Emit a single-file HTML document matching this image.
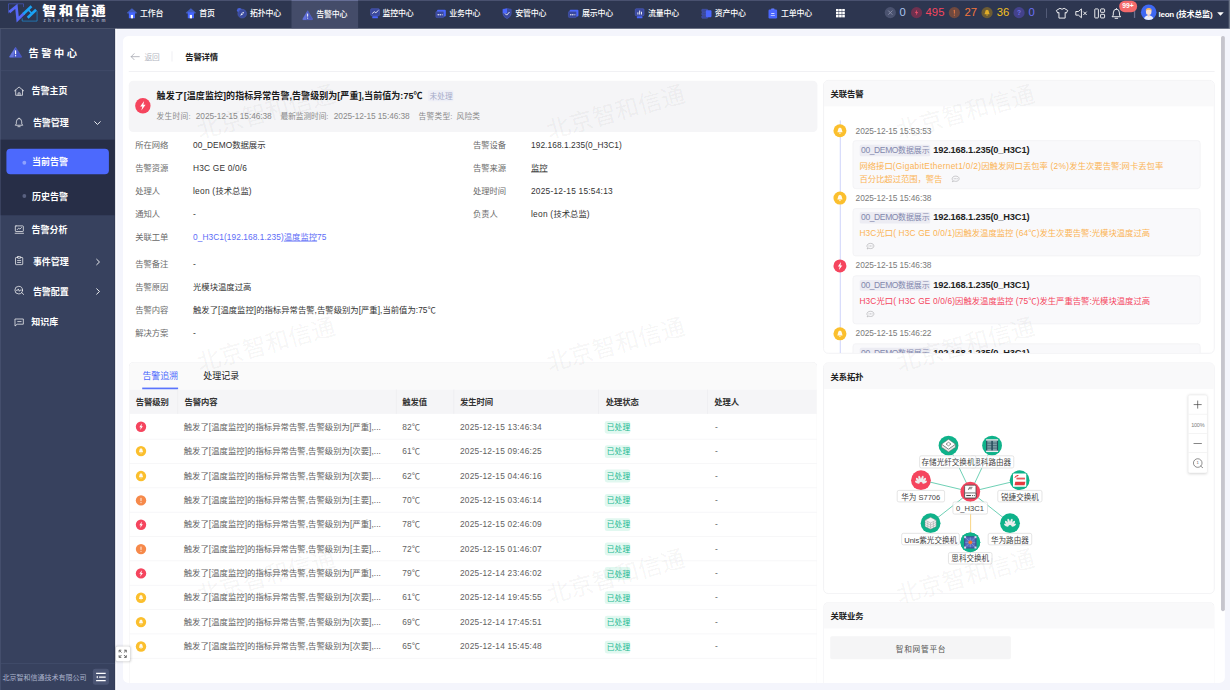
<!DOCTYPE html>
<html lang="zh-CN">
<head>
<meta charset="utf-8">
<title>告警详情</title>
<style>
html,body{margin:0;padding:0;width:1230px;height:690px;overflow:hidden;background:#f4f5fc;}
#app{position:absolute;left:0;top:0;width:1920px;height:1078px;transform:scale(0.640625);transform-origin:0 0;font-family:"Liberation Sans","Noto Sans CJK SC",sans-serif;font-size:12px;color:#333;overflow:hidden;background:#f4f5fc;}
#app *{box-sizing:border-box;}
.abs{position:absolute;}
.nw{white-space:nowrap;}
svg{display:block;overflow:visible;}
/* ---------- top bar ---------- */
#top{position:absolute;left:0;top:0;width:1920px;height:44.644px;background:#2d3650;}
#top .hl{position:absolute;left:0;top:0;width:100%;height:1.405px;background:#5a6180;}
#top .act{position:absolute;left:455.337px;top:0;width:103.493px;height:44.644px;background:#444c69;}
#top .act i{position:absolute;left:0;top:0;width:100%;height:1.405px;background:#7a82b0;}
.tm{position:absolute;top:0;height:44.644px;line-height:42.771px;color:#fff;font-size:12.4px;font-weight:500;white-space:nowrap;letter-spacing:-0.3px;}
.tic{position:absolute;top:12.956px;width:15.61px;height:15.61px;}
/* ---------- sidebar ---------- */
#side{position:absolute;left:0;top:44.644px;width:180.293px;height:1033.366px;background:#37415e;}

#side .edge{position:absolute;left:0;top:0;width:1.405px;height:100%;background:#4d5775;}
#side .shadow{position:absolute;right:0;top:0;width:2.498px;height:100%;background:linear-gradient(90deg,rgba(30,36,58,0),rgba(30,36,58,.55));}
.sm{margin-top:1.093px;position:absolute;color:#fff;font-size:14px;font-weight:bold;white-space:nowrap;line-height:31.22px;height:31.22px;}
.sic{position:absolute;}
.sic path,.sic rect,.sic circle{vector-effect:none;}

/* ---------- main ---------- */
#mainedge{position:absolute;left:180.293px;top:44.644px;width:2.185px;height:1033.366px;background:#fdfdff;}
#topedge{position:absolute;left:179.512px;top:44.644px;width:1740.488px;height:1.561px;background:#fdfdff;}
#card{position:absolute;left:191.844px;top:56.195px;width:1719.727px;height:1009.639px;background:#fff;border-radius:8.585px;}
.t{position:absolute;white-space:nowrap;height:31.22px;line-height:31.22px;margin-top:-15.61px;}
.t .l{letter-spacing:var(--ls,0px);}
.t.cj{letter-spacing:var(--ls,0px);}
.t.tg .l{font-size:13.3px;}
.lb{font-size:13px;color:#6a6a6a;}
.vl{font-size:13px;color:#333;}
.sub{font-size:12px;color:#8a8a8a;}
</style>
</head>
<body>
<div id="app">
<!--TOP-->
<div id="top">
  <div class="hl"></div>
  <div class="act"><i></i></div>
<svg class="abs" style="left:12.488px;top:5.463px;width:46.829px;height:29.659px" viewBox="8 3.5 30 19" fill="none">
<path d="M23.8 7.4 V4.1 H8.8 V13.6" stroke="#4f5fe0" stroke-width=".55"/>
<path d="M22.5 18.6 V21.4 H37.4 V11.2" stroke="#1aa3f5" stroke-width=".55"/>
<path d="M9.6 12.4 L16.7 6.6 L18 19.8 L24.4 13.6" stroke="#5668f7" stroke-width="2.7" stroke-linejoin="miter"/>
<path d="M23.6 14.3 L31.8 6.5" stroke="#1aa3f5" stroke-width="2.6"/>
<path d="M28 18 L36.4 10" stroke="#1aa3f5" stroke-width="2.6"/>
<path d="M28.6 10.2 L32 13.6" stroke="#1aa3f5" stroke-width="1.6"/>
</svg>
<div class="abs nw" style="left:66.498px;top:2.029px;font-size:19.8px;line-height:30.595px;font-weight:900;color:#fff;letter-spacing:3.1px;transform:scaleX(1.122);transform-origin:0 50%;">智和信通</div>
<div class="abs nw" style="left:67.746px;top:28.41px;font-size:7px;line-height:7.805px;font-weight:bold;color:#a4a9bf;letter-spacing:3.86px;">zhtelecom.com</div>
<svg class="tic" style="left:198.244px;top:12.8px;width:15.922px;height:15.922px" viewBox="0 0 102 102"><path d="M51 0 L102 44 L96 52 L6 52 L0 44 Z" fill="#4a6be0" opacity=".75"/><rect x="20" y="40" width="62" height="60" rx="4" fill="#4566ff"/><rect x="40" y="66" width="22" height="34" fill="#fff"/></svg><div class="tm" style="left:218.537px">工作台</div>
<svg class="tic" style="left:289.873px;top:12.8px;width:15.922px;height:15.922px" viewBox="0 0 102 102"><path d="M51 0 L102 44 L96 52 L6 52 L0 44 Z" fill="#4a6be0" opacity=".75"/><rect x="20" y="40" width="62" height="60" rx="4" fill="#4566ff"/><rect x="40" y="66" width="22" height="34" fill="#fff"/></svg><div class="tm" style="left:310.946px">首页</div>
<svg class="tic" style="left:369.327px;top:12.488px;width:16.234px;height:16.859px" viewBox="0 0 104 108"><circle cx="30" cy="26" r="24" fill="#4a66e8" opacity=".9"/><circle cx="58" cy="60" r="44" fill="#3a4a9e"/><circle cx="58" cy="60" r="44" fill="none" stroke="#5064c8" stroke-width="4"/><path d="M78 40 L64 68 L38 80 L52 52 Z" fill="#fff"/><circle cx="58" cy="60" r="6" fill="#3a4a9e"/></svg><div class="tm" style="left:390.244px">拓扑中心</div>
<svg class="tic" style="left:471.883px;top:15.922px;width:16.546px;height:14.985px" viewBox="0 0 106 96"><path d="M53 4 L102 88 Q104 94 98 94 L8 94 Q2 94 4 88 Z" fill="#4a58be" stroke="#5868d0" stroke-width="6" stroke-linejoin="round"/><path d="M53 4 L36 94 L8 94 Q2 94 4 88 Z" fill="#7d8cf5" opacity=".5"/><rect x="48" y="32" width="10" height="32" rx="4" fill="#fff"/><circle cx="53" cy="78" r="6" fill="#fff"/></svg><div class="tm" style="left:493.737px;margin-top:1.249px">告警中心</div>
<svg class="tic" style="left:577.561px;top:13.424px;width:14.985px;height:15.61px" viewBox="0 0 96 100"><rect x="4" y="4" width="88" height="70" rx="10" fill="#3a489c" stroke="#5266d4" stroke-width="5"/><path d="M22 50 L40 34 L56 44 L80 22" fill="none" stroke="#fff" stroke-width="8" stroke-linecap="round" stroke-linejoin="round"/><rect x="20" y="80" width="56" height="18" rx="5" fill="#4a66ff"/></svg><div class="tm" style="left:597.229px">监控中心</div>
<svg class="tic" style="left:679.961px;top:14.985px;width:16.234px;height:13.112px" viewBox="0 0 104 84"><rect x="14" y="2" width="88" height="66" rx="10" fill="#4a66ff"/><rect x="2" y="18" width="80" height="62" rx="10" fill="#3a489c" stroke="#5266d4" stroke-width="4"/><circle cx="26" cy="52" r="7" fill="#fff"/><circle cx="46" cy="52" r="7" fill="#fff"/><circle cx="66" cy="52" r="7" fill="#fff" opacity=".6"/></svg><div class="tm" style="left:701.19px">业务中心</div>
<svg class="tic" style="left:784.234px;top:13.424px;width:14.985px;height:16.546px" viewBox="0 0 96 106"><path d="M6 10 L48 2 L90 10 L90 56 Q88 84 48 104 Q8 84 6 56 Z" fill="#3a489c" stroke="#5266d4" stroke-width="4"/><path d="M6 10 L48 2 L48 50 L6 50 Z" fill="#4a66ff"/><path d="M30 54 L44 68 L70 40" fill="none" stroke="#fff" stroke-width="9" stroke-linecap="round" stroke-linejoin="round"/></svg><div class="tm" style="left:804.215px">安管中心</div>
<svg class="tic" style="left:887.259px;top:14.985px;width:16.234px;height:13.112px" viewBox="0 0 104 84"><rect x="14" y="2" width="88" height="66" rx="10" fill="#4a66ff"/><rect x="2" y="18" width="80" height="62" rx="10" fill="#3a489c" stroke="#5266d4" stroke-width="4"/><circle cx="26" cy="52" r="7" fill="#fff"/><circle cx="46" cy="52" r="7" fill="#fff"/><circle cx="66" cy="52" r="7" fill="#fff" opacity=".6"/></svg><div class="tm" style="left:908.488px">展示中心</div>
<svg class="tic" style="left:991.22px;top:13.424px;width:14.985px;height:15.61px" viewBox="0 0 96 100"><rect x="4" y="4" width="88" height="70" rx="10" fill="#3a489c" stroke="#5266d4" stroke-width="5"/><rect x="26" y="40" width="9" height="22" fill="#fff"/><rect x="44" y="22" width="9" height="40" fill="#fff"/><rect x="62" y="34" width="9" height="28" fill="#fff"/><rect x="20" y="80" width="56" height="18" rx="5" fill="#4a66ff"/></svg><div class="tm" style="left:1011.512px">流量中心</div>
<svg class="tic" style="left:1094.556px;top:14.049px;width:15.922px;height:14.985px" viewBox="0 0 102 96"><rect x="3" y="3" width="60" height="26" rx="6" fill="#3a489c" stroke="#5266d4" stroke-width="4"/><rect x="3" y="35" width="60" height="26" rx="6" fill="#3a489c" stroke="#5266d4" stroke-width="4"/><rect x="3" y="67" width="60" height="26" rx="6" fill="#3a489c" stroke="#5266d4" stroke-width="4"/><rect x="44" y="14" width="56" height="68" rx="8" fill="#4a66ff"/></svg><div class="tm" style="left:1115.785px">资产中心</div>
<svg class="tic" style="left:1198.829px;top:13.112px;width:14.673px;height:16.234px" viewBox="0 0 94 104"><rect x="30" y="2" width="34" height="20" rx="6" fill="#6c84ff"/><rect x="4" y="12" width="86" height="90" rx="12" fill="#4a66ff"/><rect x="30" y="50" width="34" height="8" rx="3" fill="#fff"/><rect x="26" y="70" width="42" height="8" rx="3" fill="#cfd8ff"/></svg><div class="tm" style="left:1219.122px">工单中心</div>
<svg class="abs" style="left:1304.663px;top:13.58px;width:13.737px;height:13.112px" viewBox="0 0 88 84"><rect x="0" y="0" width="26" height="24" fill="#fff"/><rect x="31" y="0" width="26" height="24" fill="#fff"/><rect x="62" y="0" width="26" height="24" fill="#fff"/><rect x="0" y="30" width="26" height="24" fill="#fff"/><rect x="31" y="30" width="26" height="24" fill="#fff"/><rect x="62" y="30" width="26" height="24" fill="#fff"/><rect x="0" y="60" width="26" height="24" fill="#fff"/><rect x="31" y="60" width="26" height="24" fill="#fff"/><rect x="62" y="60" width="26" height="24" fill="#fff"/></svg>
<svg class="abs" style="left:1380.839px;top:10.927px;width:17.483px;height:17.483px" viewBox="0 0 112 112"><circle cx="56" cy="56" r="56" fill="#4a526f"/><path d="M38 38 L74 74 M74 38 L38 74" stroke="#8d93ad" stroke-width="9" stroke-linecap="round"/></svg>
<div class="abs nw" style="left:1404.254px;top:0;height:44.644px;line-height:39.961px;font-size:17.6px;color:#a9c3ee;">0</div>
<svg class="abs" style="left:1421.737px;top:10.927px;width:17.483px;height:17.483px" viewBox="0 0 112 112"><circle cx="56" cy="56" r="56" fill="#70314f"/><path d="M62 24 L40 60 L54 60 L48 88 L72 50 L58 50 Z" fill="#e8506a"/></svg>
<div class="abs nw" style="left:1444.839px;top:0;height:44.644px;line-height:39.961px;font-size:17.6px;color:#f6465f;">495</div>
<svg class="abs" style="left:1481.366px;top:10.927px;width:17.483px;height:17.483px" viewBox="0 0 112 112"><circle cx="56" cy="56" r="56" fill="#70493f"/><rect x="51" y="28" width="10" height="38" rx="4" fill="#e87a45"/><circle cx="56" cy="80" r="6" fill="#e87a45"/></svg>
<div class="abs nw" style="left:1505.405px;top:0;height:44.644px;line-height:39.961px;font-size:17.6px;color:#f5773d;">27</div>
<svg class="abs" style="left:1532.254px;top:10.927px;width:17.483px;height:17.483px" viewBox="0 0 112 112"><circle cx="56" cy="56" r="56" fill="#6e5c33"/><path d="M56 26 Q76 28 76 56 L82 72 L30 72 L36 56 Q36 28 56 26 Z" fill="#e0ac28"/><circle cx="56" cy="80" r="7" fill="#e0ac28"/></svg>
<div class="abs nw" style="left:1555.98px;top:0;height:44.644px;line-height:39.961px;font-size:17.6px;color:#f7c11e;">36</div>
<svg class="abs" style="left:1581.893px;top:10.927px;width:17.483px;height:17.483px" viewBox="0 0 112 112"><circle cx="56" cy="56" r="56" fill="#44428c"/><text x="56" y="80" font-size="68" font-weight="bold" text-anchor="middle" fill="#6f72e8" font-family="Liberation Sans,sans-serif">?</text></svg>
<div class="abs nw" style="left:1605.62px;top:0;height:44.644px;line-height:39.961px;font-size:17.6px;color:#6b6ff5;">0</div>
<div class="abs" style="left:1633.093px;top:13.112px;width:1.249px;height:15.298px;background:#69718e"></div>
<svg class="abs" style="left:1648.39px;top:11.551px;width:19.668px;height:17.171px" viewBox="0 0 126 110" fill="none" stroke="#fff" stroke-width="9" stroke-linejoin="round"><path d="M42 6 Q63 26 84 6 L120 28 L106 54 L94 48 L94 104 L32 104 L32 48 L20 54 L6 28 Z"/></svg>
<svg class="abs" style="left:1678.985px;top:12.8px;width:18.107px;height:15.61px" viewBox="0 0 116 100" fill="none" stroke="#fff" stroke-width="9" stroke-linejoin="round" stroke-linecap="round"><path d="M6 32 L28 32 L58 6 L58 94 L28 68 L6 68 Z"/><path d="M80 36 L108 64 M108 36 L80 64"/></svg>
<svg class="abs" style="left:1707.707px;top:13.112px;width:17.171px;height:15.922px" viewBox="0 0 110 102" fill="none" stroke="#fff" stroke-width="9" stroke-linejoin="round"><rect x="6" y="6" width="36" height="90" rx="6"/><rect x="64" y="6" width="40" height="34" rx="6"/><rect x="64" y="60" width="40" height="36" rx="6"/></svg>
<svg class="abs" style="left:1735.18px;top:12.8px;width:15.298px;height:16.859px" viewBox="0 0 98 108" fill="none" stroke="#fff" stroke-width="9" stroke-linejoin="round" stroke-linecap="round"><path d="M49 6 Q80 10 80 46 L80 68 L92 84 L6 84 L18 68 L18 46 Q18 10 49 6 Z"/><path d="M36 100 L62 100"/></svg>
<div class="abs" style="left:1770.459px;top:13.112px;width:1.249px;height:15.298px;background:#69718e"></div>
<div class="abs nw" style="left:1746.732px;top:1.093px;width:28.098px;height:17.795px;border-radius:8.898px;background:#f4696b;color:#fff;font-size:10.6px;font-weight:bold;line-height:16.546px;text-align:center;">99+</div>
<svg class="abs" style="left:1781.385px;top:6.712px;width:24.195px;height:24.195px" viewBox="0 0 155 155"><defs><clipPath id="avc"><circle cx="77.5" cy="77.5" r="77.5"/></clipPath></defs><circle cx="77.5" cy="77.5" r="77.5" fill="#3f68f2"/><g clip-path="url(#avc)"><path d="M28 155 Q30 112 77 108 Q124 112 127 155 Z" fill="#e9eefc"/><path d="M62 108 L77 128 L92 108 Z" fill="#f7d5bd"/><ellipse cx="77.5" cy="72" rx="28" ry="32" fill="#fbe0cb"/><path d="M48 66 Q46 34 78 34 Q110 34 108 66 Q96 52 78 52 Q60 52 48 66 Z" fill="#f0b35c"/></g></svg>
<div class="abs nw" style="left:1808.234px;top:0;height:44.644px;line-height:46.829px;font-size:12.6px;font-weight:bold;color:#fff;letter-spacing:-0.35px;">leon (技术总监)</div>
<svg class="abs" style="left:1900.332px;top:18.732px;width:10.302px;height:5.62px" viewBox="0 0 66 36"><path d="M0 0 L66 0 L33 36 Z" fill="#fff"/></svg>
<div class="abs" style="left:1918.439px;top:0;width:1.561px;height:44.644px;background:#6b7487"></div>
</div>
<!--SIDE-->
<div id="side">
<div class="edge"></div>
<svg class="sic" style="left:14.049px;top:28.722px;width:20.605px;height:17.171px" viewBox="0 0 132 110"><path d="M66 4 L126 98 Q130 106 122 106 L10 106 Q2 106 6 98 Z" fill="#4353c4" stroke="#5565d6" stroke-width="5" stroke-linejoin="round"/><path d="M66 4 L44 106 L10 106 Q2 106 6 98 Z" fill="#8b9af8" opacity=".5"/><rect x="60" y="36" width="12" height="38" rx="5" fill="#fff"/><circle cx="66" cy="90" r="7" fill="#fff"/></svg>
<div class="abs nw" style="left:44.332px;top:22.478px;height:31.22px;line-height:31.22px;font-size:16px;font-weight:bold;color:#fff;letter-spacing:3.9px;margin-top:1.093px">告警中心</div>
<div class="abs" style="left:0;top:65.093px;width:179.512px;height:1.249px;background:#46506e"></div>
<svg class="sic" style="left:21.854px;top:89.912px;width:15.61px;height:14.673px" viewBox="0 0 100 94" fill="none" stroke="#fff" stroke-linecap="round" stroke-linejoin="round" stroke-width="7"><path d="M4 44 L50 5 L96 44"/><path d="M16 36 V88 H84 V36"/><path d="M40 88 V64 H60 V88"/></svg>
<div class="sm" style="left:49.171px;top:81.639px">告警主页</div>
<svg class="sic" style="left:23.102px;top:138.927px;width:13.424px;height:14.673px" viewBox="0 0 86 94" fill="none" stroke="#fff" stroke-linecap="round" stroke-linejoin="round" stroke-width="7"><path d="M43 5 Q70 8 70 40 L70 60 L80 74 L6 74 L16 60 L16 40 Q16 8 43 5 Z"/><path d="M32 88 H54"/></svg>
<div class="sm" style="left:51.356px;top:130.654px">告警管理</div>
<svg class="sic" style="left:147.044px;top:144.234px;width:10.302px;height:6.244px" viewBox="0 0 66 40" fill="none" stroke="#fff" stroke-linecap="round" stroke-linejoin="round" stroke-width="9"><path d="M5 6 L33 34 L61 6"/></svg>
<div class="abs" style="left:1.405px;top:173.737px;width:178.107px;height:117.541px;background:#272e47"></div>
<div class="abs" style="left:9.522px;top:187.317px;width:160.624px;height:39.961px;background:#4c69fd;border-radius:6.244px"></div>
<div class="abs" style="left:35.902px;top:207.298px;width:5.932px;height:5.932px;margin:-0.468px;border-radius:50%;background:#8fa2fe"></div>
<div class="sm" style="left:50.107px;top:192.468px">当前告警</div>
<div class="abs" style="left:35.902px;top:259.122px;width:5.932px;height:5.932px;margin:-0.468px;border-radius:50%;background:#596180"></div>
<div class="sm" style="left:50.107px;top:246.01px">历史告警</div>
<svg class="sic" style="left:23.102px;top:307.2px;width:14.361px;height:13.112px" viewBox="0 0 92 84" fill="none" stroke="#fff" stroke-linecap="round" stroke-linejoin="round" stroke-width="7"><rect x="6" y="4" width="80" height="56" rx="6"/><path d="M4 78 H88"/><path d="M24 42 L40 26 L52 36 L68 20"/></svg>
<div class="sm" style="left:49.327px;top:297.366px">告警分析</div>
<svg class="sic" style="left:23.102px;top:355.278px;width:13.737px;height:13.737px" viewBox="0 0 88 88" fill="none" stroke="#fff" stroke-linecap="round" stroke-linejoin="round" stroke-width="7"><path d="M28 12 H14 Q8 12 8 18 V78 Q8 84 14 84 H74 Q80 84 80 78 V18 Q80 12 74 12 H60"/><rect x="28" y="4" width="32" height="16" rx="4"/><path d="M28 42 H60 M28 62 H60"/></svg>
<div class="sm" style="left:51.356px;top:347.473px">事件管理</div>
<svg class="sic" style="left:149.854px;top:359.024px;width:6.244px;height:9.99px" viewBox="0 0 40 64" fill="none" stroke="#fff" stroke-linecap="round" stroke-linejoin="round" stroke-width="9"><path d="M6 5 L34 32 L6 59"/></svg>
<svg class="sic" style="left:22.478px;top:401.483px;width:15.922px;height:14.361px" viewBox="0 0 102 92" fill="none" stroke="#fff" stroke-linecap="round" stroke-linejoin="round" stroke-width="7"><circle cx="46" cy="44" r="38"/><path d="M76 70 L96 88"/><path d="M22 46 L34 46 L42 32 L52 56 L60 44 L70 44"/></svg>
<div class="sm" style="left:51.356px;top:394.146px">告警配置</div>
<svg class="sic" style="left:149.854px;top:405.541px;width:6.244px;height:9.99px" viewBox="0 0 40 64" fill="none" stroke="#fff" stroke-linecap="round" stroke-linejoin="round" stroke-width="9"><path d="M6 5 L34 32 L6 59"/></svg>
<svg class="sic" style="left:23.102px;top:452.059px;width:14.361px;height:12.488px" viewBox="0 0 92 80" fill="none" stroke="#fff" stroke-linecap="round" stroke-linejoin="round" stroke-width="7"><path d="M6 6 H86 V58 H24 L6 74 Z"/><path d="M30 32 H64"/></svg>
<div class="sm" style="left:48.702px;top:442.693px">知识库</div>
<div class="abs" style="left:0;top:990.595px;width:179.512px;height:1.249px;background:#46506e"></div>
<div class="abs nw" style="left:3.746px;top:997.463px;height:31.22px;line-height:31.22px;font-size:11px;color:#aab2cb;letter-spacing:-0.05px">北京智和信通技术有限公司</div>
<div class="abs" style="left:145.483px;top:999.493px;width:24.663px;height:24.663px;border-radius:3.746px;background:#4b5574"></div>
<svg class="sic" style="left:150.478px;top:1004.956px;width:14.985px;height:13.737px" viewBox="0 0 96 88" fill="none" stroke="#fff" stroke-width="12"><path d="M0 8 H96 M30 44 H96 M0 80 H96"/><path d="M0 44 L18 30 V58 Z" fill="#fff" stroke="none"/></svg>
<div class="shadow"></div>
</div>
<div id="topedge"></div><div id="mainedge"></div>
<div id="card"></div>
<svg class="abs" style="left:204.176px;top:83.044px;width:14.049px;height:10.927px" viewBox="0 0 90 70" fill="none" stroke="#9a9ca6" stroke-width="7" stroke-linecap="round" stroke-linejoin="round"><path d="M86 35 H6 M34 5 L5 35 L34 65"/></svg>
<div class="t  cj" style="left:225.405px;top:89.756px;font-size:12px;color:#b4b7c2;">返回</div>
<div class="abs" style="left:267.551px;top:80.078px;width:1.249px;height:16.234px;background:#e6e6ec"></div>
<div class="t  cj" style="left:289.093px;top:89.756px;--ls:-0.204px;font-size:13px;font-weight:bold;color:#222;">告警详情</div>
<div class="abs" style="left:200.741px;top:110.517px;width:1695.22px;height:1.561px;background:#eaeaee"></div>
<div class="abs" style="left:201.054px;top:125.815px;width:1075.2px;height:79.922px;background:#f5f5f7;border-radius:7.024px"></div>
<svg class="abs" style="left:210.732px;top:153.288px;width:24.039px;height:24.039px" viewBox="0 0 154 154"><circle cx="77" cy="77" r="77" fill="#f5455e"/><path d="M90 30 L50 84 L72 84 L62 126 L104 68 L82 68 Z" fill="#fff"/></svg>
<div class="t  cj" style="left:244.449px;top:149.541px;--ls:0.130px;font-size:14px;font-weight:bold;color:#1a1a1a;">触发了[温度监控]的指标异常告警,告警级别为[严重],当前值为:75℃</div>
<div class="abs" style="left:668.41px;top:141.424px;width:39.337px;height:16.234px;background:#eeeff7;border-radius:2.341px"></div>
<div class="t  cj" style="left:670.595px;top:150.634px;--ls:-0.038px;font-size:12px;color:#a6abc8;">未处理</div>
<div class="t sub cj" style="left:244.449px;top:181.385px;--ls:0.439px;">发生时间:</div>
<div class="t sub" style="left:305.639px;top:180.917px;--ls:-0.126px;font-size:13px;"><span class="l">2025-12-15 15:46:38</span></div>
<div class="t sub cj" style="left:438.01px;top:181.385px;--ls:-0.104px;">最新监测时间:</div>
<div class="t sub" style="left:521.054px;top:180.917px;--ls:-0.126px;font-size:13px;"><span class="l">2025-12-15 15:46:38</span></div>
<div class="t sub cj" style="left:653.268px;top:181.385px;--ls:0.439px;">告警类型:</div>
<div class="t sub cj" style="left:712.741px;top:181.385px;--ls:0.274px;">风险类</div>
<div class="t lb cj" style="left:211.044px;top:226.81px;--ls:-0.079px;">所在网络</div>
<div class="t vl" style="left:301.268px;top:226.81px;--ls:0.065px;"><span class="l">00_DEMO</span>数据展示</div>
<div class="t lb cj" style="left:738.341px;top:226.81px;--ls:-0.079px;">告警设备</div>
<div class="t vl" style="left:828.878px;top:226.81px;--ls:0.114px;"><span class="l">192.168.1.235(0_H3C1)</span></div>
<div class="t lb cj" style="left:211.044px;top:262.556px;--ls:-0.079px;">告警资源</div>
<div class="t vl" style="left:301.268px;top:262.556px;--ls:0.306px;"><span class="l">H3C GE 0/0/6</span></div>
<div class="t lb cj" style="left:738.341px;top:262.556px;--ls:-0.079px;">告警来源</div>
<div class="t vl cj" style="left:828.878px;top:262.556px;--ls:-0.052px;"><u>监控</u></div>
<div class="t lb cj" style="left:211.044px;top:298.459px;--ls:-0.080px;">处理人</div>
<div class="t vl" style="left:301.268px;top:298.459px;--ls:0.407px;"><span class="l">leon (</span>技术总监)</div>
<div class="t lb cj" style="left:738.341px;top:298.459px;--ls:-0.079px;">处理时间</div>
<div class="t vl" style="left:828.878px;top:298.459px;--ls:0.375px;"><span class="l">2025-12-15 15:54:13</span></div>
<div class="t lb cj" style="left:211.044px;top:334.361px;--ls:-0.080px;">通知人</div>
<div class="t vl cj" style="left:301.268px;top:334.361px;">-</div>
<div class="t lb cj" style="left:738.341px;top:334.361px;--ls:-0.080px;">负责人</div>
<div class="t vl" style="left:828.878px;top:334.361px;--ls:0.407px;"><span class="l">leon (</span>技术总监)</div>
<div class="t lb cj" style="left:211.044px;top:370.263px;--ls:-0.079px;">关联工单</div>
<div class="t vl" style="left:301.268px;top:370.263px;--ls:0.105px;color:#5d6cf7;"><span class="l">0_H3C1(192.168.1.235)</span><u>温度监控</u><span class="l">75</span></div>
<div class="t lb cj" style="left:211.044px;top:412.41px;--ls:-0.079px;">告警备注</div>
<div class="t vl cj" style="left:301.268px;top:412.41px;">-</div>
<div class="t lb cj" style="left:211.044px;top:448.312px;--ls:-0.079px;">告警原因</div>
<div class="t vl cj" style="left:301.268px;top:448.312px;">光模块温度过高</div>
<div class="t lb cj" style="left:211.044px;top:484.215px;--ls:-0.079px;">告警内容</div>
<div class="t vl cj" style="left:301.268px;top:484.215px;--ls:0.036px;">触发了[温度监控]的指标异常告警,告警级别为[严重],当前值为:75℃</div>
<div class="t lb cj" style="left:211.044px;top:520.117px;--ls:-0.079px;">解决方案</div>
<div class="t vl cj" style="left:301.268px;top:520.117px;">-</div>
<div class="abs" style="left:200.898px;top:565.073px;width:1075.2px;height:500.761px;border:1.249px solid #ededf0;border-bottom:none;border-radius:7.805px 7.805px 0 0;background:#fff;overflow:hidden"><div style="height:41.522px;background:#fafafa"></div></div>
<div class="t  cj" style="left:222.283px;top:587.395px;--ls:-0.107px;font-size:14px;color:#4c69fd;">告警追溯</div>
<div class="abs" style="left:222.283px;top:605.034px;width:55.571px;height:2.498px;background:#5b75fd"></div>
<div class="t  cj" style="left:317.19px;top:587.395px;--ls:0.049px;font-size:14px;color:#222;">处理记录</div>
<div class="abs" style="left:201.99px;top:607.532px;width:1073.015px;height:38.4px;background:#f5f5f7"></div>
<div class="abs" style="left:277.073px;top:607.532px;width:1.093px;height:38.4px;background:#ebebef"></div>
<div class="abs" style="left:618.146px;top:607.532px;width:1.093px;height:38.4px;background:#ebebef"></div>
<div class="abs" style="left:707.59px;top:607.532px;width:1.093px;height:38.4px;background:#ebebef"></div>
<div class="abs" style="left:933.932px;top:607.532px;width:1.093px;height:38.4px;background:#ebebef"></div>
<div class="abs" style="left:1104.078px;top:607.532px;width:1.093px;height:38.4px;background:#ebebef"></div>
<div class="t  cj" style="left:211.98px;top:627.356px;--ls:-0.126px;font-size:13px;font-weight:bold;color:#333;">告警级别</div>
<div class="t  cj" style="left:287.844px;top:627.356px;--ls:-0.126px;font-size:13px;font-weight:bold;color:#333;">告警内容</div>
<div class="t  cj" style="left:627.98px;top:627.356px;--ls:-0.127px;font-size:13px;font-weight:bold;color:#333;">触发值</div>
<div class="t  cj" style="left:718.049px;top:627.356px;--ls:-0.126px;font-size:13px;font-weight:bold;color:#333;">发生时间</div>
<div class="t  cj" style="left:945.483px;top:627.356px;--ls:-0.126px;font-size:13px;font-weight:bold;color:#333;">处理状态</div>
<div class="t  cj" style="left:1115.005px;top:627.356px;--ls:-0.127px;font-size:13px;font-weight:bold;color:#333;">处理人</div>
<svg class="abs" style="left:211.98px;top:658.42px;width:16.234px;height:16.234px" viewBox="0 0 100 100"><circle cx="50" cy="50" r="50" fill="#f5455e"/><path d="M58 20 L34 54 L48 54 L42 82 L68 46 L54 46 Z" fill="#fff"/></svg>
<div class="t  cj" style="left:286.751px;top:666.38px;--ls:0.077px;font-size:13px;color:#626262;">触发了[温度监控]的指标异常告警,告警级别为[严重],...</div>
<div class="t " style="left:627.98px;top:666.38px;--ls:0.150px;font-size:13px;color:#626262;"><span class="l">82</span>℃</div>
<div class="t " style="left:718.049px;top:666.38px;--ls:0.375px;font-size:13px;color:#626262;"><span class="l">2025-12-15 13:46:34</span></div>
<div class="abs" style="left:944.234px;top:657.171px;width:39.649px;height:19.98px;background:#e1f8f0;border-radius:3.746px"></div>
<div class="t  cj" style="left:947.2px;top:667.941px;--ls:0.170px;font-size:12px;color:#20b890;">已处理</div>
<div class="t  cj" style="left:1116.098px;top:666.38px;font-size:13px;color:#626262;">-</div>
<div class="abs" style="left:201.99px;top:684.956px;width:1073.015px;height:1.093px;background:#f2f2f5"></div>
<svg class="abs" style="left:211.98px;top:696.46px;width:16.234px;height:16.234px" viewBox="0 0 100 100"><circle cx="50" cy="50" r="50" fill="#fbbf2d"/><path d="M50 24 Q66 26 66 48 L70 62 L30 62 L34 48 Q34 26 50 24 Z" fill="#fff" opacity=".92"/><circle cx="50" cy="69" r="5" fill="#fff" opacity=".92"/></svg>
<div class="t  cj" style="left:286.751px;top:704.421px;--ls:0.077px;font-size:13px;color:#626262;">触发了[温度监控]的指标异常告警,告警级别为[次要],...</div>
<div class="t " style="left:627.98px;top:704.421px;--ls:0.150px;font-size:13px;color:#626262;"><span class="l">61</span>℃</div>
<div class="t " style="left:718.049px;top:704.421px;--ls:0.375px;font-size:13px;color:#626262;"><span class="l">2025-12-15 09:46:25</span></div>
<div class="abs" style="left:944.234px;top:695.212px;width:39.649px;height:19.98px;background:#e1f8f0;border-radius:3.746px"></div>
<div class="t  cj" style="left:947.2px;top:705.982px;--ls:0.170px;font-size:12px;color:#20b890;">已处理</div>
<div class="t  cj" style="left:1116.098px;top:704.421px;font-size:13px;color:#626262;">-</div>
<div class="abs" style="left:201.99px;top:722.997px;width:1073.015px;height:1.093px;background:#f2f2f5"></div>
<svg class="abs" style="left:211.98px;top:734.501px;width:16.234px;height:16.234px" viewBox="0 0 100 100"><circle cx="50" cy="50" r="50" fill="#fbbf2d"/><path d="M50 24 Q66 26 66 48 L70 62 L30 62 L34 48 Q34 26 50 24 Z" fill="#fff" opacity=".92"/><circle cx="50" cy="69" r="5" fill="#fff" opacity=".92"/></svg>
<div class="t  cj" style="left:286.751px;top:742.462px;--ls:0.077px;font-size:13px;color:#626262;">触发了[温度监控]的指标异常告警,告警级别为[次要],...</div>
<div class="t " style="left:627.98px;top:742.462px;--ls:0.150px;font-size:13px;color:#626262;"><span class="l">62</span>℃</div>
<div class="t " style="left:718.049px;top:742.462px;--ls:0.375px;font-size:13px;color:#626262;"><span class="l">2025-12-15 04:46:16</span></div>
<div class="abs" style="left:944.234px;top:733.253px;width:39.649px;height:19.98px;background:#e1f8f0;border-radius:3.746px"></div>
<div class="t  cj" style="left:947.2px;top:744.023px;--ls:0.170px;font-size:12px;color:#20b890;">已处理</div>
<div class="t  cj" style="left:1116.098px;top:742.462px;font-size:13px;color:#626262;">-</div>
<div class="abs" style="left:201.99px;top:761.038px;width:1073.015px;height:1.093px;background:#f2f2f5"></div>
<svg class="abs" style="left:211.98px;top:772.542px;width:16.234px;height:16.234px" viewBox="0 0 100 100"><circle cx="50" cy="50" r="50" fill="#f6894a"/><rect x="45.5" y="24" width="9" height="34" rx="4" fill="#fff" opacity=".92"/><circle cx="50" cy="71" r="5.5" fill="#fff" opacity=".92"/></svg>
<div class="t  cj" style="left:286.751px;top:780.503px;--ls:0.077px;font-size:13px;color:#626262;">触发了[温度监控]的指标异常告警,告警级别为[主要],...</div>
<div class="t " style="left:627.98px;top:780.503px;--ls:0.150px;font-size:13px;color:#626262;"><span class="l">70</span>℃</div>
<div class="t " style="left:718.049px;top:780.503px;--ls:0.375px;font-size:13px;color:#626262;"><span class="l">2025-12-15 03:46:14</span></div>
<div class="abs" style="left:944.234px;top:771.294px;width:39.649px;height:19.98px;background:#e1f8f0;border-radius:3.746px"></div>
<div class="t  cj" style="left:947.2px;top:782.064px;--ls:0.170px;font-size:12px;color:#20b890;">已处理</div>
<div class="t  cj" style="left:1116.098px;top:780.503px;font-size:13px;color:#626262;">-</div>
<div class="abs" style="left:201.99px;top:799.079px;width:1073.015px;height:1.093px;background:#f2f2f5"></div>
<svg class="abs" style="left:211.98px;top:810.583px;width:16.234px;height:16.234px" viewBox="0 0 100 100"><circle cx="50" cy="50" r="50" fill="#f5455e"/><path d="M58 20 L34 54 L48 54 L42 82 L68 46 L54 46 Z" fill="#fff"/></svg>
<div class="t  cj" style="left:286.751px;top:818.544px;--ls:0.077px;font-size:13px;color:#626262;">触发了[温度监控]的指标异常告警,告警级别为[严重],...</div>
<div class="t " style="left:627.98px;top:818.544px;--ls:0.150px;font-size:13px;color:#626262;"><span class="l">78</span>℃</div>
<div class="t " style="left:718.049px;top:818.544px;--ls:0.375px;font-size:13px;color:#626262;"><span class="l">2025-12-15 02:46:09</span></div>
<div class="abs" style="left:944.234px;top:809.335px;width:39.649px;height:19.98px;background:#e1f8f0;border-radius:3.746px"></div>
<div class="t  cj" style="left:947.2px;top:820.105px;--ls:0.170px;font-size:12px;color:#20b890;">已处理</div>
<div class="t  cj" style="left:1116.098px;top:818.544px;font-size:13px;color:#626262;">-</div>
<div class="abs" style="left:201.99px;top:837.12px;width:1073.015px;height:1.093px;background:#f2f2f5"></div>
<svg class="abs" style="left:211.98px;top:848.624px;width:16.234px;height:16.234px" viewBox="0 0 100 100"><circle cx="50" cy="50" r="50" fill="#f6894a"/><rect x="45.5" y="24" width="9" height="34" rx="4" fill="#fff" opacity=".92"/><circle cx="50" cy="71" r="5.5" fill="#fff" opacity=".92"/></svg>
<div class="t  cj" style="left:286.751px;top:856.585px;--ls:0.077px;font-size:13px;color:#626262;">触发了[温度监控]的指标异常告警,告警级别为[主要],...</div>
<div class="t " style="left:627.98px;top:856.585px;--ls:0.150px;font-size:13px;color:#626262;"><span class="l">72</span>℃</div>
<div class="t " style="left:718.049px;top:856.585px;--ls:0.375px;font-size:13px;color:#626262;"><span class="l">2025-12-15 01:46:07</span></div>
<div class="abs" style="left:944.234px;top:847.376px;width:39.649px;height:19.98px;background:#e1f8f0;border-radius:3.746px"></div>
<div class="t  cj" style="left:947.2px;top:858.146px;--ls:0.170px;font-size:12px;color:#20b890;">已处理</div>
<div class="t  cj" style="left:1116.098px;top:856.585px;font-size:13px;color:#626262;">-</div>
<div class="abs" style="left:201.99px;top:875.161px;width:1073.015px;height:1.093px;background:#f2f2f5"></div>
<svg class="abs" style="left:211.98px;top:886.665px;width:16.234px;height:16.234px" viewBox="0 0 100 100"><circle cx="50" cy="50" r="50" fill="#f5455e"/><path d="M58 20 L34 54 L48 54 L42 82 L68 46 L54 46 Z" fill="#fff"/></svg>
<div class="t  cj" style="left:286.751px;top:894.626px;--ls:0.077px;font-size:13px;color:#626262;">触发了[温度监控]的指标异常告警,告警级别为[严重],...</div>
<div class="t " style="left:627.98px;top:894.626px;--ls:0.150px;font-size:13px;color:#626262;"><span class="l">79</span>℃</div>
<div class="t " style="left:718.049px;top:894.626px;--ls:0.375px;font-size:13px;color:#626262;"><span class="l">2025-12-14 23:46:02</span></div>
<div class="abs" style="left:944.234px;top:885.417px;width:39.649px;height:19.98px;background:#e1f8f0;border-radius:3.746px"></div>
<div class="t  cj" style="left:947.2px;top:896.187px;--ls:0.170px;font-size:12px;color:#20b890;">已处理</div>
<div class="t  cj" style="left:1116.098px;top:894.626px;font-size:13px;color:#626262;">-</div>
<div class="abs" style="left:201.99px;top:913.202px;width:1073.015px;height:1.093px;background:#f2f2f5"></div>
<svg class="abs" style="left:211.98px;top:924.706px;width:16.234px;height:16.234px" viewBox="0 0 100 100"><circle cx="50" cy="50" r="50" fill="#fbbf2d"/><path d="M50 24 Q66 26 66 48 L70 62 L30 62 L34 48 Q34 26 50 24 Z" fill="#fff" opacity=".92"/><circle cx="50" cy="69" r="5" fill="#fff" opacity=".92"/></svg>
<div class="t  cj" style="left:286.751px;top:932.667px;--ls:0.077px;font-size:13px;color:#626262;">触发了[温度监控]的指标异常告警,告警级别为[次要],...</div>
<div class="t " style="left:627.98px;top:932.667px;--ls:0.150px;font-size:13px;color:#626262;"><span class="l">61</span>℃</div>
<div class="t " style="left:718.049px;top:932.667px;--ls:0.375px;font-size:13px;color:#626262;"><span class="l">2025-12-14 19:45:55</span></div>
<div class="abs" style="left:944.234px;top:923.458px;width:39.649px;height:19.98px;background:#e1f8f0;border-radius:3.746px"></div>
<div class="t  cj" style="left:947.2px;top:934.228px;--ls:0.170px;font-size:12px;color:#20b890;">已处理</div>
<div class="t  cj" style="left:1116.098px;top:932.667px;font-size:13px;color:#626262;">-</div>
<div class="abs" style="left:201.99px;top:951.243px;width:1073.015px;height:1.093px;background:#f2f2f5"></div>
<svg class="abs" style="left:211.98px;top:962.747px;width:16.234px;height:16.234px" viewBox="0 0 100 100"><circle cx="50" cy="50" r="50" fill="#fbbf2d"/><path d="M50 24 Q66 26 66 48 L70 62 L30 62 L34 48 Q34 26 50 24 Z" fill="#fff" opacity=".92"/><circle cx="50" cy="69" r="5" fill="#fff" opacity=".92"/></svg>
<div class="t  cj" style="left:286.751px;top:970.708px;--ls:0.077px;font-size:13px;color:#626262;">触发了[温度监控]的指标异常告警,告警级别为[次要],...</div>
<div class="t " style="left:627.98px;top:970.708px;--ls:0.150px;font-size:13px;color:#626262;"><span class="l">69</span>℃</div>
<div class="t " style="left:718.049px;top:970.708px;--ls:0.375px;font-size:13px;color:#626262;"><span class="l">2025-12-14 17:45:51</span></div>
<div class="abs" style="left:944.234px;top:961.499px;width:39.649px;height:19.98px;background:#e1f8f0;border-radius:3.746px"></div>
<div class="t  cj" style="left:947.2px;top:972.269px;--ls:0.170px;font-size:12px;color:#20b890;">已处理</div>
<div class="t  cj" style="left:1116.098px;top:970.708px;font-size:13px;color:#626262;">-</div>
<div class="abs" style="left:201.99px;top:989.284px;width:1073.015px;height:1.093px;background:#f2f2f5"></div>
<svg class="abs" style="left:211.98px;top:1000.788px;width:16.234px;height:16.234px" viewBox="0 0 100 100"><circle cx="50" cy="50" r="50" fill="#fbbf2d"/><path d="M50 24 Q66 26 66 48 L70 62 L30 62 L34 48 Q34 26 50 24 Z" fill="#fff" opacity=".92"/><circle cx="50" cy="69" r="5" fill="#fff" opacity=".92"/></svg>
<div class="t  cj" style="left:286.751px;top:1008.749px;--ls:0.077px;font-size:13px;color:#626262;">触发了[温度监控]的指标异常告警,告警级别为[次要],...</div>
<div class="t " style="left:627.98px;top:1008.749px;--ls:0.150px;font-size:13px;color:#626262;"><span class="l">65</span>℃</div>
<div class="t " style="left:718.049px;top:1008.749px;--ls:0.375px;font-size:13px;color:#626262;"><span class="l">2025-12-14 15:45:48</span></div>
<div class="abs" style="left:944.234px;top:999.54px;width:39.649px;height:19.98px;background:#e1f8f0;border-radius:3.746px"></div>
<div class="t  cj" style="left:947.2px;top:1010.31px;--ls:0.170px;font-size:12px;color:#20b890;">已处理</div>
<div class="t  cj" style="left:1116.098px;top:1008.749px;font-size:13px;color:#626262;">-</div>
<div class="abs" style="left:201.99px;top:1027.325px;width:1073.015px;height:1.093px;background:#f2f2f5"></div>
<div class="abs" style="left:1285.151px;top:125.346px;width:610.81px;height:426.459px;border:1.249px solid #ededf0;border-radius:7.805px;background:#fff;overflow:hidden"><div style="height:39.961px;background:#f9f9fa"></div><div class="abs" style="left:24.82px;top:61.971px;width:1.249px;height:405.854px;background:#b3bcf7"></div><svg class="abs" style="left:15.141px;top:67.434px;width:20.293px;height:20.293px" viewBox="0 0 100 100"><circle cx="50" cy="50" r="50" fill="#fbbf2d"/><path d="M50 24 Q66 26 66 48 L70 62 L30 62 L34 48 Q34 26 50 24 Z" fill="#fff" opacity=".92"/><circle cx="50" cy="69" r="5" fill="#fff" opacity=".92"/></svg><div class="t " style="left:49.483px;top:78.205px;--ls:-0.143px;font-size:13px;color:#7a7a7a;"><span class="l">2025-12-15 15:53:53</span></div><div class="abs" style="left:45.112px;top:92.878px;width:542.907px;height:75.395px;background:#f9f9fb;border:1.093px solid #efeff3;border-radius:4.683px"></div><div class="abs" style="left:55.571px;top:100.059px;width:110.205px;height:17.171px;background:#ececf3;border-radius:2.498px"></div><div class="t tg" style="left:57.912px;top:108.488px;--ls:-0.600px;font-size:12.3px;color:#8388ad;"><span class="l">00_DEMO</span>数据展示</div><div class="t " style="left:170.459px;top:108.488px;--ls:-0.258px;font-size:14.5px;font-weight:bold;color:#1f1f1f;"><span class="l">192.168.1.235(0_H3C1)</span></div><div class="t " style="left:55.415px;top:133.463px;--ls:0.467px;font-size:13px;color:#fbb455;">网络接口<span class="l">(GigabitEthernet1/0/2)</span>因触发网口丢包率<span class="l"> (2%)</span>发生次要告警:网卡丢包率</div><div class="t cj " style="left:55.415px;top:152.976px;--ls:-0.045px;font-size:13px;color:#fbb455;">百分比超过范围，警告</div><svg class="abs" style="left:199.337px;top:147.668px;width:12.8px;height:10.927px" viewBox="0 0 82 70" fill="none" stroke="#a9a9ad" stroke-width="6" stroke-linejoin="round"><path d="M44 6 C66 6 78 18 78 32 C78 46 66 58 44 58 C38 58 32 57 27 55 L10 62 L16 48 C10 43 8 38 8 32 C8 18 22 6 44 6 Z"/><path d="M28 32 H30 M43 32 H45 M58 32 H60" stroke-linecap="round" stroke-width="7"/></svg><svg class="abs" style="left:15.141px;top:172.956px;width:20.293px;height:20.293px" viewBox="0 0 100 100"><circle cx="50" cy="50" r="50" fill="#fbbf2d"/><path d="M50 24 Q66 26 66 48 L70 62 L30 62 L34 48 Q34 26 50 24 Z" fill="#fff" opacity=".92"/><circle cx="50" cy="69" r="5" fill="#fff" opacity=".92"/></svg><div class="t " style="left:49.483px;top:183.18px;--ls:-0.143px;font-size:13px;color:#7a7a7a;"><span class="l">2025-12-15 15:46:38</span></div><div class="abs" style="left:45.112px;top:198.4px;width:542.907px;height:75.395px;background:#f9f9fb;border:1.093px solid #efeff3;border-radius:4.683px"></div><div class="abs" style="left:55.571px;top:205.034px;width:110.205px;height:17.171px;background:#ececf3;border-radius:2.498px"></div><div class="t tg" style="left:57.912px;top:213.463px;--ls:-0.600px;font-size:12.3px;color:#8388ad;"><span class="l">00_DEMO</span>数据展示</div><div class="t " style="left:170.459px;top:213.463px;--ls:-0.258px;font-size:14.5px;font-weight:bold;color:#1f1f1f;"><span class="l">192.168.1.235(0_H3C1)</span></div><div class="t " style="left:55.415px;top:238.439px;--ls:0.228px;font-size:13px;color:#fbb455;"><span class="l">H3C</span>光口<span class="l">( H3C GE 0/0/1)</span>因触发温度监控<span class="l"> (64</span>℃)发生次要告警:光模块温度过高</div><svg class="abs" style="left:65.405px;top:252.862px;width:12.8px;height:10.927px" viewBox="0 0 82 70" fill="none" stroke="#a9a9ad" stroke-width="6" stroke-linejoin="round"><path d="M44 6 C66 6 78 18 78 32 C78 46 66 58 44 58 C38 58 32 57 27 55 L10 62 L16 48 C10 43 8 38 8 32 C8 18 22 6 44 6 Z"/><path d="M28 32 H30 M43 32 H45 M58 32 H60" stroke-linecap="round" stroke-width="7"/></svg><svg class="abs" style="left:15.141px;top:278.478px;width:20.293px;height:20.293px" viewBox="0 0 100 100"><circle cx="50" cy="50" r="50" fill="#f5455e"/><path d="M58 20 L34 54 L48 54 L42 82 L68 46 L54 46 Z" fill="#fff"/></svg><div class="t " style="left:49.483px;top:288.702px;--ls:-0.143px;font-size:13px;color:#7a7a7a;"><span class="l">2025-12-15 15:46:38</span></div><div class="abs" style="left:45.112px;top:303.922px;width:542.907px;height:75.395px;background:#f9f9fb;border:1.093px solid #efeff3;border-radius:4.683px"></div><div class="abs" style="left:55.571px;top:310.556px;width:110.205px;height:17.171px;background:#ececf3;border-radius:2.498px"></div><div class="t tg" style="left:57.912px;top:318.985px;--ls:-0.600px;font-size:12.3px;color:#8388ad;"><span class="l">00_DEMO</span>数据展示</div><div class="t " style="left:170.459px;top:318.985px;--ls:-0.258px;font-size:14.5px;font-weight:bold;color:#1f1f1f;"><span class="l">192.168.1.235(0_H3C1)</span></div><div class="t " style="left:55.415px;top:343.961px;--ls:0.228px;font-size:13px;color:#f5455e;"><span class="l">H3C</span>光口<span class="l">( H3C GE 0/0/6)</span>因触发温度监控<span class="l"> (75</span>℃)发生严重告警:光模块温度过高</div><svg class="abs" style="left:65.405px;top:358.384px;width:12.8px;height:10.927px" viewBox="0 0 82 70" fill="none" stroke="#a9a9ad" stroke-width="6" stroke-linejoin="round"><path d="M44 6 C66 6 78 18 78 32 C78 46 66 58 44 58 C38 58 32 57 27 55 L10 62 L16 48 C10 43 8 38 8 32 C8 18 22 6 44 6 Z"/><path d="M28 32 H30 M43 32 H45 M58 32 H60" stroke-linecap="round" stroke-width="7"/></svg><svg class="abs" style="left:15.141px;top:384.468px;width:20.293px;height:20.293px" viewBox="0 0 100 100"><circle cx="50" cy="50" r="50" fill="#fbbf2d"/><path d="M50 24 Q66 26 66 48 L70 62 L30 62 L34 48 Q34 26 50 24 Z" fill="#fff" opacity=".92"/><circle cx="50" cy="69" r="5" fill="#fff" opacity=".92"/></svg><div class="t " style="left:49.483px;top:394.693px;--ls:-0.143px;font-size:13px;color:#7a7a7a;"><span class="l">2025-12-15 15:46:22</span></div><div class="abs" style="left:45.112px;top:409.912px;width:542.907px;height:75.395px;background:#f9f9fb;border:1.093px solid #efeff3;border-radius:4.683px"></div><div class="abs" style="left:55.571px;top:416.546px;width:110.205px;height:17.171px;background:#ececf3;border-radius:2.498px"></div><div class="t tg" style="left:57.912px;top:424.976px;--ls:-0.600px;font-size:12.3px;color:#8388ad;"><span class="l">00_DEMO</span>数据展示</div><div class="t " style="left:170.459px;top:424.976px;--ls:-0.258px;font-size:14.5px;font-weight:bold;color:#1f1f1f;"><span class="l">192.168.1.235(0_H3C1)</span></div></div>
<div class="t  cj" style="left:1296.234px;top:147.512px;--ls:-0.079px;font-size:13px;font-weight:bold;color:#222;">关联告警</div>
<div class="abs" style="left:1285.151px;top:566.01px;width:610.81px;height:360.585px;border:1.249px solid #ededf0;border-radius:7.805px;background:#fff;overflow:hidden"><div style="height:39.961px;background:#f9f9fa"></div></div>
<div class="t  cj" style="left:1296.234px;top:588.176px;--ls:-0.079px;font-size:13px;font-weight:bold;color:#222;">关系拓扑</div>
<svg class="abs" style="left:1373.659px;top:671.22px;width:280.976px;height:218.537px" viewBox="880 430 180 140"><line x1="970.4" y1="491.9" x2="948.4" y2="445.7" stroke="#3cc09c" stroke-width="0.75"/><line x1="970.4" y1="491.9" x2="992.2" y2="445.7" stroke="#3cc09c" stroke-width="0.75"/><line x1="970.4" y1="491.9" x2="920.9" y2="480.1" stroke="#3cc09c" stroke-width="0.75"/><line x1="970.4" y1="491.9" x2="1019.8" y2="480.1" stroke="#3cc09c" stroke-width="0.75"/><line x1="970.4" y1="491.9" x2="930.6" y2="523.2" stroke="#3cc09c" stroke-width="0.75"/><line x1="970.4" y1="491.9" x2="1009.9" y2="523.2" stroke="#3cc09c" stroke-width="0.75"/><line x1="970.4" y1="491.9" x2="970.4" y2="542.2" stroke="#f7c65a" stroke-width="0.75"/></svg>
<svg class="abs" style="left:1464.82px;top:680.117px;width:31.22px;height:31.22px" viewBox="938.4 435.7 20 20"><circle cx="948.4" cy="445.7" r="9.9" fill="#0fb28a"/><g transform="translate(948.4 445.7) scale(1.13) translate(-948.4 -445.7)"><path d="M942.1999999999999 444.5 L948.4 440.09999999999997 L954.6 444.5 L948.4 448.9 Z" fill="#fff" stroke="#555" stroke-width="0.4"/><path d="M942.1999999999999 444.5 L948.4 448.9 L954.6 444.5 V447.09999999999997 L948.4 451.3 L942.1999999999999 447.09999999999997 Z" fill="#e8e8e8" stroke="#555" stroke-width="0.4"/><path d="M946.1999999999999 444.3 L948.4 442.7 L950.6 444.3 L948.4 445.9 Z" fill="none" stroke="#444" stroke-width="0.5"/></g></svg>
<svg class="abs" style="left:1533.19px;top:680.117px;width:31.22px;height:31.22px" viewBox="982.2 435.7 20 20"><circle cx="992.2" cy="445.7" r="9.9" fill="#0fb28a"/><rect x="986.2" y="439.7" width="12" height="12" rx="1" fill="#2a4f5e"/><rect x="987.4000000000001" y="440.7" width="4" height="10" fill="#7fa0a8"/><rect x="993.0" y="440.7" width="4" height="10" fill="#7fa0a8"/><path d="M987.4000000000001 443.2 H997.0 M987.4000000000001 445.7 H997.0 M987.4000000000001 448.2 H997.0" stroke="#2a4f5e" stroke-width="0.6"/><rect x="986.2" y="439.3" width="12" height="1.4" fill="#e8f0f0"/><rect x="986.2" y="450.7" width="12" height="1.4" fill="#e8f0f0"/></svg>
<svg class="abs" style="left:1421.893px;top:733.815px;width:31.22px;height:31.22px" viewBox="910.9 470.1 20 20"><circle cx="920.9" cy="480.1" r="9.9" fill="#f5455e"/><g transform="translate(920.9 480.1) scale(1.12) translate(-920.9 -480.1)"><ellipse cx="920.9" cy="479.70000000000005" rx="1.05" ry="2.2" fill="#eeeeee" transform="rotate(-66 920.9 483.3)"/><ellipse cx="920.9" cy="479.20000000000005" rx="1.05" ry="2.7" fill="#eeeeee" transform="rotate(-40 920.9 483.3)"/><ellipse cx="920.9" cy="478.90000000000003" rx="1.05" ry="3.0" fill="#eeeeee" transform="rotate(-14 920.9 483.3)"/><ellipse cx="920.9" cy="478.90000000000003" rx="1.05" ry="3.0" fill="#eeeeee" transform="rotate(14 920.9 483.3)"/><ellipse cx="920.9" cy="479.20000000000005" rx="1.05" ry="2.7" fill="#eeeeee" transform="rotate(40 920.9 483.3)"/><ellipse cx="920.9" cy="479.70000000000005" rx="1.05" ry="2.2" fill="#eeeeee" transform="rotate(66 920.9 483.3)"/></g></svg>
<svg class="abs" style="left:1576.273px;top:733.815px;width:31.22px;height:31.22px" viewBox="1009.8 470.1 20 20"><circle cx="1019.8" cy="480.1" r="9.9" fill="#0fb28a"/><g transform="translate(1019.8 480.1) scale(1.07) translate(-1019.8 -480.1)"><rect x="1013.5999999999999" y="473.90000000000003" width="12.4" height="12.4" rx="0.8" fill="#fff"/><path d="M1014.8 477.90000000000003 Q1016.1999999999999 474.70000000000005 1019.0 475.3 L1018.1999999999999 476.5 Q1016.1999999999999 476.3 1015.8 477.90000000000003 Z" fill="#e0262c"/><rect x="1016.8" y="477.70000000000005" width="8" height="1.7" fill="#e0262c" opacity=".75"/><rect x="1015.4" y="481.5" width="9.4" height="3.2" fill="#e0262c" opacity=".9" transform="skewX(-12)" style="transform-box:fill-box;transform-origin:center"/></g></svg>
<svg class="abs" style="left:1437.034px;top:801.093px;width:31.22px;height:31.22px" viewBox="920.6 513.2 20 20"><circle cx="930.6" cy="523.2" r="9.9" fill="#0fb28a"/><path d="M925.0 520.2 L930.6 517.4000000000001 L936.2 520.2 V526.6 L930.6 529.4000000000001 L925.0 526.6 Z" fill="#f4f4f4" stroke="#777" stroke-width="0.4"/><path d="M925.0 520.2 L930.6 523.0 L936.2 520.2 M930.6 523.0 V529.4000000000001 M925.0 522.4000000000001 L930.6 525.2 L936.2 522.4000000000001 M925.0 524.6 L930.6 527.4000000000001 L936.2 524.6 M927.8000000000001 521.6 V528.0 M933.4 521.6 V528.0" fill="none" stroke="#888" stroke-width="0.4"/></svg>
<svg class="abs" style="left:1560.82px;top:801.093px;width:31.22px;height:31.22px" viewBox="999.9 513.2 20 20"><circle cx="1009.9" cy="523.2" r="9.9" fill="#0fb28a"/><g transform="translate(1009.9 523.2) scale(1.12) translate(-1009.9 -523.2)"><ellipse cx="1009.9" cy="522.8000000000001" rx="1.05" ry="2.2" fill="#eeeeee" transform="rotate(-66 1009.9 526.4000000000001)"/><ellipse cx="1009.9" cy="522.3000000000001" rx="1.05" ry="2.7" fill="#eeeeee" transform="rotate(-40 1009.9 526.4000000000001)"/><ellipse cx="1009.9" cy="522.0000000000001" rx="1.05" ry="3.0" fill="#eeeeee" transform="rotate(-14 1009.9 526.4000000000001)"/><ellipse cx="1009.9" cy="522.0000000000001" rx="1.05" ry="3.0" fill="#eeeeee" transform="rotate(14 1009.9 526.4000000000001)"/><ellipse cx="1009.9" cy="522.3000000000001" rx="1.05" ry="2.7" fill="#eeeeee" transform="rotate(40 1009.9 526.4000000000001)"/><ellipse cx="1009.9" cy="522.8000000000001" rx="1.05" ry="2.2" fill="#eeeeee" transform="rotate(66 1009.9 526.4000000000001)"/></g></svg>
<svg class="abs" style="left:1499.161px;top:830.751px;width:31.22px;height:31.22px" viewBox="960.4 532.2 20 20"><circle cx="970.4" cy="542.2" r="9.9" fill="#0fb28a"/><rect x="964.1999999999999" y="536.0" width="12.4" height="12.4" rx="0.8" fill="#3f4f96"/><rect x="965.4" y="537.2" width="10" height="10" fill="#5d74c4" opacity=".8"/><path d="M965.4 542.2 H975.4 M970.4 537.2 V547.2 M966.4 538.2 L974.4 546.2 M974.4 538.2 L966.4 546.2" stroke="#9fb0e8" stroke-width="0.5"/><circle cx="970.4" cy="542.2" r="1.9" fill="#f07a2a"/><rect x="964.1999999999999" y="536.0" width="2" height="2" fill="#d8dcf0"/><rect x="974.6" y="536.0" width="2" height="2" fill="#d8dcf0"/><rect x="964.1999999999999" y="546.4000000000001" width="2" height="2" fill="#d8dcf0"/><rect x="974.6" y="546.4000000000001" width="2" height="2" fill="#d8dcf0"/></svg>
<svg class="abs" style="left:1499.161px;top:752.234px;width:31.22px;height:31.22px" viewBox="960.4 481.9 20 20"><circle cx="970.4" cy="491.9" r="9.9" fill="#f5455e"/><rect x="964.6999999999999" y="485.29999999999995" width="11.4" height="12.8" rx="1.3" fill="#fff" stroke="#444" stroke-width="0.75"/><rect x="964.6999999999999" y="493.09999999999997" width="11.4" height="5" rx="0.9" fill="#fff" stroke="#444" stroke-width="0.75"/><rect x="966.4" y="495.09999999999997" width="4.6" height="1.1" fill="#444"/><circle cx="972.6" cy="495.7" r="0.6" fill="#444"/><circle cx="974.4" cy="495.7" r="0.6" fill="#444"/><path d="M968.4 490.09999999999997 L969.5 487.5 L972.6 487.5 M969.1 488.9 H972.0" stroke="#444" stroke-width="0.65" fill="none"/></svg>
<div class="abs" style="left:1514.146px;top:711.18px;width:69.307px;height:19.356px;background:rgba(255,255,255,.86);border:1.093px solid #d6d6d6;border-radius:3.122px"></div>
<div class="t" style="left:1514.146px;top:722.42px;width:69.307px;text-align:center;font-size:11.8px;color:#444;">思科路由器</div>
<div class="abs" style="left:1435.473px;top:711.18px;width:88.663px;height:19.356px;background:rgba(255,255,255,.86);border:1.093px solid #d6d6d6;border-radius:3.122px"></div>
<div class="t" style="left:1435.473px;top:722.42px;width:88.663px;text-align:center;font-size:11.8px;color:#444;">存储光纤交换机</div>
<div class="abs" style="left:1399.727px;top:764.878px;width:75.083px;height:19.356px;background:rgba(255,255,255,.86);border:1.093px solid #d6d6d6;border-radius:3.122px"></div>
<div class="t" style="left:1399.727px;top:776.117px;width:75.083px;text-align:center;font-size:11.8px;color:#444;">华为 S7706</div>
<div class="abs" style="left:1557.229px;top:764.878px;width:69.776px;height:19.356px;background:rgba(255,255,255,.86);border:1.093px solid #d6d6d6;border-radius:3.122px"></div>
<div class="t" style="left:1557.229px;top:776.117px;width:69.776px;text-align:center;font-size:11.8px;color:#444;">锐捷交换机</div>
<div class="abs" style="left:1407.376px;top:832.156px;width:90.693px;height:19.356px;background:rgba(255,255,255,.86);border:1.093px solid #d6d6d6;border-radius:3.122px"></div>
<div class="t" style="left:1407.376px;top:843.395px;width:90.693px;text-align:center;font-size:11.8px;color:#444;">Unis紫光交换机</div>
<div class="abs" style="left:1541.62px;top:832.156px;width:69.62px;height:19.356px;background:rgba(255,255,255,.86);border:1.093px solid #d6d6d6;border-radius:3.122px"></div>
<div class="t" style="left:1541.62px;top:843.395px;width:69.62px;text-align:center;font-size:11.8px;color:#444;">华为路由器</div>
<div class="abs" style="left:1486.673px;top:783.298px;width:54.946px;height:19.356px;background:rgba(255,255,255,.86);border:1.093px solid #d6d6d6;border-radius:3.122px"></div>
<div class="t" style="left:1486.673px;top:794.537px;width:54.946px;text-align:center;font-size:11.8px;color:#444;">0_H3C1</div>
<div class="abs" style="left:1479.649px;top:861.815px;width:69.776px;height:19.356px;background:rgba(255,255,255,.86);border:1.093px solid #d6d6d6;border-radius:3.122px"></div>
<div class="t" style="left:1479.649px;top:873.054px;width:69.776px;text-align:center;font-size:11.8px;color:#444;">思科交换机</div>
<svg class="abs" style="left:1499.161px;top:830.751px;width:31.22px;height:31.22px" viewBox="960.4 532.2 20 20"><circle cx="970.4" cy="542.2" r="9.9" fill="#0fb28a"/><rect x="964.1999999999999" y="536.0" width="12.4" height="12.4" rx="0.8" fill="#3f4f96"/><rect x="965.4" y="537.2" width="10" height="10" fill="#5d74c4" opacity=".8"/><path d="M965.4 542.2 H975.4 M970.4 537.2 V547.2 M966.4 538.2 L974.4 546.2 M974.4 538.2 L966.4 546.2" stroke="#9fb0e8" stroke-width="0.5"/><circle cx="970.4" cy="542.2" r="1.9" fill="#f07a2a"/><rect x="964.1999999999999" y="536.0" width="2" height="2" fill="#d8dcf0"/><rect x="974.6" y="536.0" width="2" height="2" fill="#d8dcf0"/><rect x="964.1999999999999" y="546.4000000000001" width="2" height="2" fill="#d8dcf0"/><rect x="974.6" y="546.4000000000001" width="2" height="2" fill="#d8dcf0"/></svg>
<div class="abs" style="left:1855.063px;top:617.21px;width:29.346px;height:120.663px;background:#fff;border-radius:2.498px;box-shadow:0 0.937px 4.683px rgba(0,0,0,.16)"></div>
<div class="abs" style="left:1855.063px;top:646.244px;width:29.346px;height:0.937px;background:#eeeeee"></div>
<div class="abs" style="left:1855.063px;top:676.371px;width:29.346px;height:0.937px;background:#eeeeee"></div>
<div class="abs" style="left:1855.063px;top:706.341px;width:29.346px;height:0.937px;background:#eeeeee"></div>
<svg class="abs" style="left:1863.18px;top:624.546px;width:13.112px;height:13.112px" viewBox="0 0 84 84" stroke="#444" stroke-width="7" fill="none"><path d="M42 2 V82 M2 42 H82"/></svg>
<div class="t " style="left:1859.434px;top:663.571px;--ls:-0.345px;font-size:8.6px;color:#808080;"><span class="l">100%</span></div>
<svg class="abs" style="left:1863.18px;top:691.512px;width:13.112px;height:1.015px" viewBox="0 0 84 6.5"><rect width="84" height="6.5" fill="#444"/></svg>
<svg class="abs" style="left:1861.62px;top:714.615px;width:16.234px;height:16.234px" viewBox="0 0 104 104" fill="none" stroke="#444" stroke-width="6"><circle cx="49" cy="50" r="43"/><path d="M80 82 L98 96" stroke-linecap="round"/><text x="49" y="64" font-size="42" text-anchor="middle" fill="#666" stroke="none" font-family="Liberation Sans,sans-serif">1</text></svg>
<div class="abs" style="left:1285.151px;top:940.02px;width:610.81px;height:125.815px;border:1.249px solid #ededf0;border-radius:7.805px;border-bottom:none;border-radius:7.805px 7.805px 0 0;background:#fff;overflow:hidden"><div style="height:39.961px;background:#f9f9fa"></div></div>
<div class="t  cj" style="left:1296.234px;top:962.185px;--ls:-0.079px;font-size:13px;font-weight:bold;color:#222;">关联业务</div>
<div class="abs" style="left:1296.39px;top:992.78px;width:281.756px;height:36.215px;background:#f5f5f6;border-radius:2.498px"></div>
<div class="t  cj" style="left:1398.322px;top:1013.385px;--ls:1.110px;font-size:12px;color:#555;">智和网管平台</div>
<div class="abs" style="left:1905.951px;top:56.195px;width:5.776px;height:897.561px;background:#c6c5cd;border-radius:2.81px"></div>
<div class="abs" style="left:181.073px;top:1009.327px;width:22.166px;height:22.79px;background:#fff;border-radius:2.498px;box-shadow:0 0.937px 3.746px rgba(0,0,0,.18)"></div>
<svg class="abs" style="left:185.444px;top:1014.322px;width:13.112px;height:13.112px" viewBox="0 0 84 84" fill="none" stroke="#4a4a4a" stroke-width="8"><path d="M6 28 V6 H28 M8 8 L30 30"/><path d="M56 6 H78 V28 M76 8 L54 30"/><path d="M6 56 V78 H28 M8 76 L30 54"/><path d="M78 56 V78 H56 M76 76 L54 54"/></svg>
<div class="abs nw" style="left:227.902px;top:145.483px;width:374.634px;height:62.439px;line-height:62.439px;text-align:center;font-size:37px;color:rgba(0,0,0,.052);transform:rotate(-15.3deg);pointer-events:none;">北京智和信通</div>
<div class="abs nw" style="left:774.244px;top:145.483px;width:374.634px;height:62.439px;line-height:62.439px;text-align:center;font-size:37px;color:rgba(0,0,0,.052);transform:rotate(-15.3deg);pointer-events:none;">北京智和信通</div>
<div class="abs nw" style="left:1319.805px;top:145.483px;width:374.634px;height:62.439px;line-height:62.439px;text-align:center;font-size:37px;color:rgba(0,0,0,.052);transform:rotate(-15.3deg);pointer-events:none;">北京智和信通</div>
<div class="abs nw" style="left:227.902px;top:507.941px;width:374.634px;height:62.439px;line-height:62.439px;text-align:center;font-size:37px;color:rgba(0,0,0,.052);transform:rotate(-15.3deg);pointer-events:none;">北京智和信通</div>
<div class="abs nw" style="left:774.244px;top:507.941px;width:374.634px;height:62.439px;line-height:62.439px;text-align:center;font-size:37px;color:rgba(0,0,0,.052);transform:rotate(-15.3deg);pointer-events:none;">北京智和信通</div>
<div class="abs nw" style="left:1319.805px;top:507.941px;width:374.634px;height:62.439px;line-height:62.439px;text-align:center;font-size:37px;color:rgba(0,0,0,.052);transform:rotate(-15.3deg);pointer-events:none;">北京智和信通</div>
<div class="abs nw" style="left:227.902px;top:870.4px;width:374.634px;height:62.439px;line-height:62.439px;text-align:center;font-size:37px;color:rgba(0,0,0,.052);transform:rotate(-15.3deg);pointer-events:none;">北京智和信通</div>
<div class="abs nw" style="left:774.244px;top:870.4px;width:374.634px;height:62.439px;line-height:62.439px;text-align:center;font-size:37px;color:rgba(0,0,0,.052);transform:rotate(-15.3deg);pointer-events:none;">北京智和信通</div>
<div class="abs nw" style="left:1319.805px;top:870.4px;width:374.634px;height:62.439px;line-height:62.439px;text-align:center;font-size:37px;color:rgba(0,0,0,.052);transform:rotate(-15.3deg);pointer-events:none;">北京智和信通</div>

</div>
</body>
</html>
